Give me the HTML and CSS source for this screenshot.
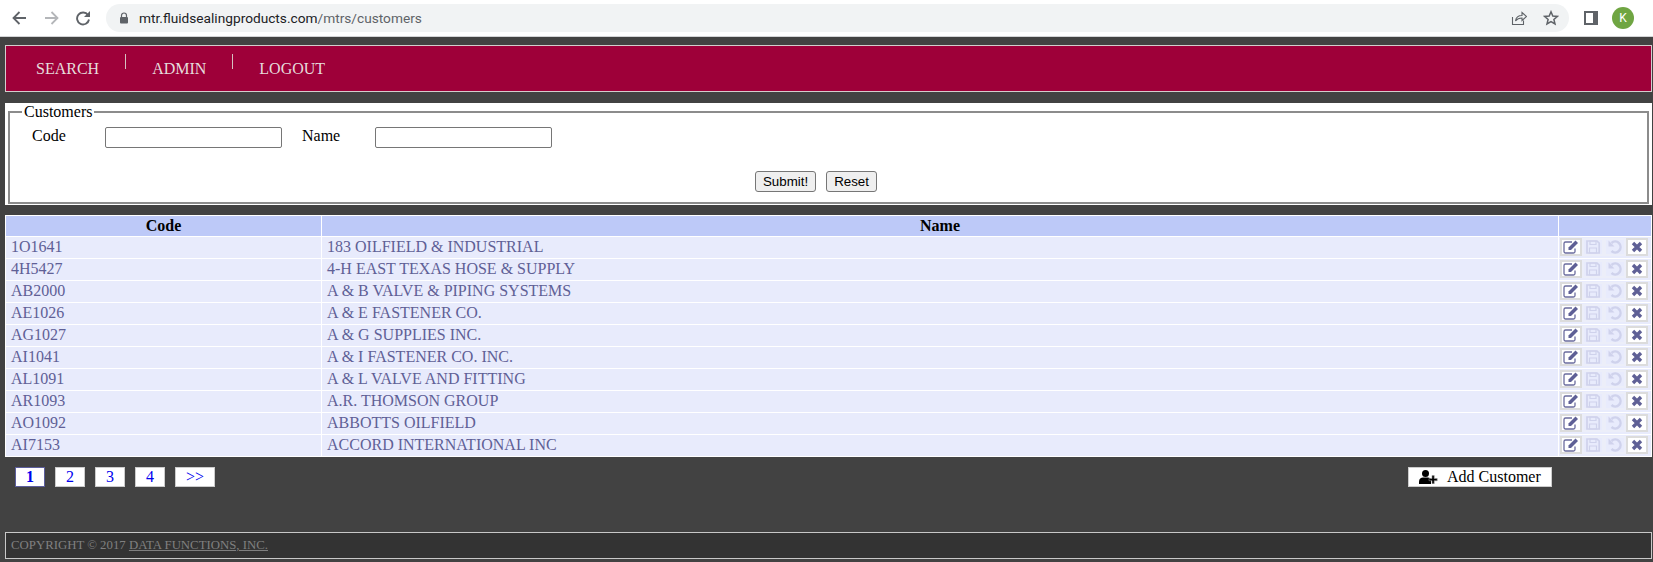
FILE: index.html
```html
<!DOCTYPE html>
<html lang="en">

<head>
    <title>Customers</title>
    <link rel="stylesheet" href="styles.css">
</head>

<body>
    <div class="chrome">
        <svg class="nav-icon" viewBox="0 0 16 16"><path d="M15 8H2.500M8.500 2 2.500 8l6 6" fill="none" stroke="#5f6368" stroke-width="1.800"/></svg>
        <svg class="nav-icon" viewBox="0 0 16 16"><path d="M2 8h12.500M8.500 2l6 6-6 6" fill="none" stroke="#b4b6b9" stroke-width="1.800"/></svg>
        <svg class="nav-icon" viewBox="0 0 16 16"><path d="M13 5A6 6 0 1 0 14 9.500" fill="none" stroke="#5f6368" stroke-width="1.900"/><path d="M15 1v6H9z" fill="#5f6368"/></svg>
        <div class="omnibox">
            <svg class="lock" viewBox="0 0 10 12"><path d="M2.500 5V3.500a2.500 2.500 0 0 1 5 0V5" fill="none" stroke="#5f6368" stroke-width="1.200"/><rect x="1" y="5" width="8" height="6.500" rx="1" fill="#5f6368"/></svg>
            <span class="url">mtr.fluidsealingproducts.com<span class="url-path">/mtrs/customers</span></span>
            <span class="omni-icons">
                <svg viewBox="0 0 16 16"><path d="M1.500 7v7.500h11v-4M4.500 11c.5-3.500 3-5.500 6.500-5.500V2.500l4.500 4-4.500 4V8C8 8 6 9 4.500 11z" fill="none" stroke="#5f6368" stroke-width="1.100"/></svg>
                <svg viewBox="0 0 16 16"><path d="M8 1.800 9.800 6l4.600.4-3.500 3 1.100 4.500L8 11.500l-4 2.400 1.100-4.500-3.500-3L6.200 6z" fill="none" stroke="#5f6368" stroke-width="1.500"/></svg>
            </span>
        </div>
        <div class="panel-icon"></div>
        <div class="avatar">K</div>
    </div>

    <div class="page">
        <div class="menu">
            <a class="menu-item">SEARCH</a>
            <span class="menu-sep"></span>
            <a class="menu-item">ADMIN</a>
            <span class="menu-sep"></span>
            <a class="menu-item">LOGOUT</a>
        </div>

        <div class="search">
            <fieldset>
                <legend>Customers</legend>
                <div class="search-row">
                    <label class="search-label">Code</label>
                    <input type="text" class="search-input">
                    <label class="search-label name-label">Name</label>
                    <input type="text" class="search-input">
                </div>
                <div class="search-buttons">
                    <button type="button">Submit!</button>
                    <button type="button">Reset</button>
                </div>
            </fieldset>
        </div>

        <table class="customers">
            <thead>
                <tr><th class="col-code">Code</th><th>Name</th><th class="col-actions"></th></tr>
            </thead>
            <tbody id="rows"></tbody>
        </table>

        <div class="below">
            <div class="pager">
                <a class="page-link current">1</a>
                <a class="page-link">2</a>
                <a class="page-link">3</a>
                <a class="page-link">4</a>
                <a class="page-link wide">&gt;&gt;</a>
            </div>
            <a class="add-customer">
                <svg viewBox="0 0 19 14"><circle cx="6.500" cy="3.500" r="3.500" fill="#000"/><path d="M0 14v-2.500C0 9 2 7.500 4 7.500h5c1.500 0 2.500.8 3 2V14z" fill="#000"/><path d="M13 5.500v3h-3v2.200h3v3h2.200v-3h3V8.500h-3v-3z" fill="#000" stroke="#999" stroke-width=".6"/></svg>
                Add Customer
            </a>
        </div>

        <div class="footer">COPYRIGHT &copy; 2017 <a class="footer-link">DATA FUNCTIONS, INC.</a></div>
    </div>

    <script src="rows.js"></script>
</body>

</html>
```

FILE: styles.css
```css
* {
    box-sizing: border-box;
}

html,
body {
    margin: 0;
    height: 100%;
}

body {
    font-family: "Liberation Serif", serif;
    font-size: 16px;
    background-color: #424242;
    overflow: hidden;
}

.chrome {
    height: 37px;
    background-color: #fff;
    border-bottom: 1px solid #d3d4d6;
    display: flex;
    align-items: center;
    padding: 0 19px 1px 11px;
}

.nav-icon {
    width: 16px;
    height: 16px;
    margin-right: 16px;
}

.omnibox {
    flex: 1;
    height: 28px;
    margin-left: -1px;
    background-color: #f1f3f4;
    border-radius: 14px;
    display: flex;
    align-items: center;
    padding-left: 13px;
}

.lock {
    width: 10px;
    height: 12px;
}

.url {
    margin-left: 10px;
    font-family: Roboto, sans-serif;
    font-size: 13.7px;
    color: #202124;
}

.url-path {
    color: #5f6368;
}

.omni-icons {
    margin-left: auto;
    display: flex;
    gap: 8px;
    padding-right: 10px;
}

.omni-icons svg {
    width: 16px;
    height: 16px;
    margin-left: 8px;
}

.panel-icon {
    width: 14px;
    height: 14px;
    margin-left: 15px;
    border: 2px solid #5f6368;
    border-right-width: 5px;
    background-color: #fff;
}

.avatar {
    width: 22px;
    height: 22px;
    margin-left: 14px;
    border-radius: 50%;
    background-color: #6fa542;
    color: #fff;
    font-family: Roboto, sans-serif;
    font-size: 12px;
    text-align: center;
    line-height: 22px;
}

.page {
    padding: 8px 1px 0 5px;
}

.menu {
    height: 47px;
    background-color: #9e0039;
    border: 1px solid #d4cdcd;
    display: flex;
    padding-left: 4px;
}

.menu-item {
    color: #e6dcdc;
    line-height: 18px;
    padding: 14px 26px 0;
}

.menu-sep {
    width: 1px;
    height: 15px;
    margin-top: 8px;
    background-color: #d6c0c0;
}

.search {
    margin-top: 11px;
    height: 102px;
    background-color: #fff;
    padding: 0 3px 1px;
}

.search fieldset {
    height: 100%;
    margin: 0;
    padding: 0 0 0 22px;
    border: 2px solid #8c8c8c;
}

.search legend {
    margin-left: -10px;
}

.search-row {
    display: flex;
    align-items: flex-start;
    margin-top: 6px;
}

.search-input {
    width: 177px;
    height: 21px;
    border: 1px solid #767676;
    border-radius: 2px;
    background-color: #fff;
    padding: 1px 2px;
}

.search-label {
    width: 73px;
    line-height: 18px;
}

.name-label {
    margin-left: 20px;
}

.search-buttons {
    margin-top: 23px;
    display: flex;
    justify-content: center;
    gap: 10px;
    padding-right: 47px;
}

.search-buttons button {
    font-family: "Liberation Sans", sans-serif;
    font-size: 13.333px;
    height: 21px;
    padding: 1px 7px;
    border: 1px solid #767676;
    border-radius: 3px;
    background-color: #efefef;
    color: #000;
}

.customers {
    margin-top: 10px;
    width: 100%;
    table-layout: fixed;
    border-collapse: collapse;
    background-color: #e8ebfc;
    color: #5f6096;
}

.customers th {
    height: 21px;
    background-color: #bdc9f8;
    color: #000;
    border: 1px solid #fff;
    padding: 0;
}

.customers td {
    height: 22px;
    border: 1px solid #fff;
    padding: 0 5px 1px;
    white-space: nowrap;
}

.col-code {
    width: 316px;
}

.col-actions {
    width: 93px;
}

.customers td.actions {
    padding: 0 0 1px 1px;
}

.action-icons {
    display: flex;
}

.action {
    width: 22px;
    height: 18px;
    display: flex;
    align-items: center;
    justify-content: center;
    border: 2px solid #dcdcdc;
    background-color: #fff;
}

.action.off {
    border-color: #eceef9;
    background-color: #e8ebfc;
}

.action svg {
    width: 16px;
    height: 14px;
    flex: none;
}

.below {
    display: flex;
    justify-content: space-between;
    margin-top: 10px;
    padding: 0 100px 0 10px;
}

.pager {
    display: flex;
    gap: 10px;
}

.page-link {
    width: 30px;
    height: 20px;
    line-height: 18px;
    text-align: center;
    color: #00e;
    background-color: #fff;
    border: 1px solid #ccc;
}

.page-link.current {
    border-color: #5c5e9c;
    font-weight: bold;
}

.page-link.wide {
    width: 40px;
}

.add-customer {
    width: 144px;
    height: 20px;
    line-height: 18px;
    background-color: #fff;
    border: 1px solid #ccc;
    color: #000;
    display: flex;
    align-items: center;
    padding-left: 10px;
}

.add-customer svg {
    width: 19px;
    height: 14px;
    margin-right: 9px;
}

.footer {
    margin-top: 45px;
    height: 27px;
    border: 1px solid #c8c8c8;
    background-color: #333;
    color: #808080;
    font-size: 12.8px;
    line-height: 25px;
    padding-left: 5px;
}

.footer-link {
    text-decoration: underline;
}
```

FILE: rows.js
```js
var customers = [
    ["1O1641", "183 OILFIELD & INDUSTRIAL"],
    ["4H5427", "4-H EAST TEXAS HOSE & SUPPLY"],
    ["AB2000", "A & B VALVE & PIPING SYSTEMS"],
    ["AE1026", "A & E FASTENER CO."],
    ["AG1027", "A & G SUPPLIES INC."],
    ["AI1041", "A & I FASTENER CO. INC."],
    ["AL1091", "A & L VALVE AND FITTING"],
    ["AR1093", "A.R. THOMSON GROUP"],
    ["AO1092", "ABBOTTS OILFIELD"],
    ["AI7153", "ACCORD INTERNATIONAL INC"]
];

var editIcon = '<svg viewBox="0 0 16 14"><path d="M12 8.500v3a1.500 1.500 0 0 1-1.500 1.500h-8A1.500 1.500 0 0 1 1 11.500v-8A1.500 1.500 0 0 1 2.500 2H9" fill="none" stroke="#6b6c9e" stroke-width="1.300"/><path d="M5.500 7.500 12.500.5 15 3l-7 7H5.500z" fill="#5f6096"/></svg>';
var saveIcon = '<svg viewBox="0 0 16 14"><path d="M2 1h10l2.200 2.200V13H2z" fill="none" stroke="#cfd2ec" stroke-width="1.700"/><path d="M5 1h6v3.500H5zM4.500 8h7v5h-7z" fill="none" stroke="#cfd2ec" stroke-width="1.200"/></svg>';
var undoIcon = '<svg viewBox="0 0 16 14"><path d="M4.500 3A5.400 5.400 0 1 1 4.500 11" fill="none" stroke="#cfd2ec" stroke-width="2.500"/><path d="M1.500 .5V6.500H7.500z" fill="#cfd2ec"/></svg>';
var deleteIcon = '<svg viewBox="0 0 16 14"><path d="M4 3l8 8M12 3l-8 8" stroke="#5f6096" stroke-width="3.400"/></svg>';

var html = "";
for (var i = 0; i < customers.length; i++) {
    html += "<tr><td>" + customers[i][0].replace(/&/g, "&amp;") + "</td><td>" + customers[i][1].replace(/&/g, "&amp;") + "</td>";
    html += '<td class="actions"><div class="action-icons">';
    html += '<span class="action">' + editIcon + "</span>";
    html += '<span class="action off">' + saveIcon + "</span>";
    html += '<span class="action off">' + undoIcon + "</span>";
    html += '<span class="action">' + deleteIcon + "</span>";
    html += "</div></td></tr>";
}
document.getElementById("rows").innerHTML = html;
```
